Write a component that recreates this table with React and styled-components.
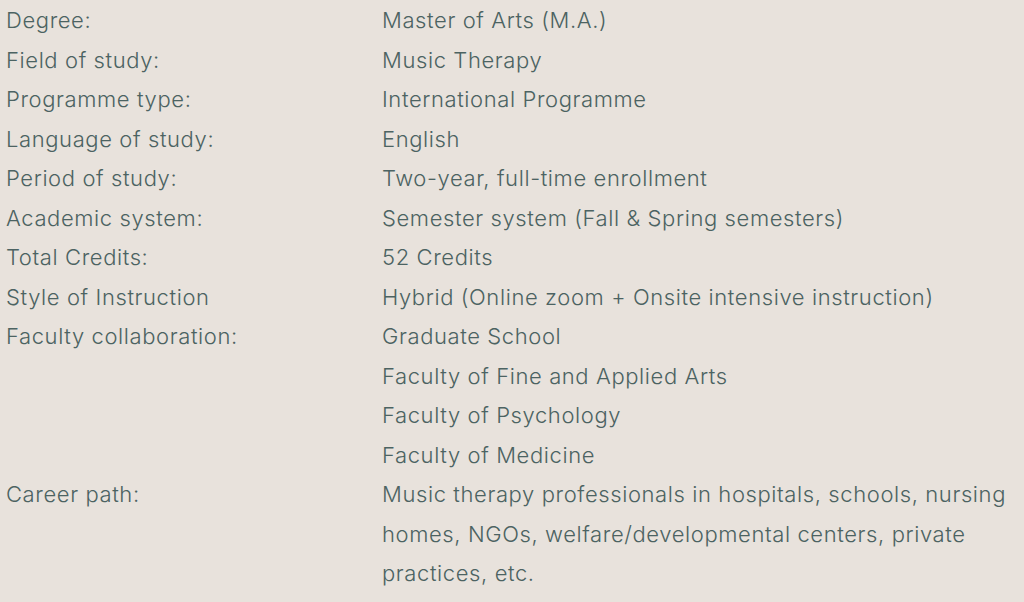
import React from 'react';
import styled, { createGlobalStyle } from 'styled-components';

const GlobalStyle = createGlobalStyle`
  html, body {
    margin: 0;
    padding: 0;
    background: #e8e2dc;
  }
`;

const Table = styled.div`
  display: grid;
  grid-template-columns: 376px 1fr;
  padding-left: 6px;
  padding-top: 1px;
  font-family: Inter, "Liberation Sans", sans-serif;
  font-weight: 300;
  font-size: 22px;
  line-height: 39.5px;
  letter-spacing: 0.6px;
  color: #4c6362;
  background: #e8e2dc;
  min-height: 602px;
  align-content: start;
`;

const Label = styled.div`
  grid-column: 1;
`;

const Value = styled.div`
  grid-column: 2;
`;

const rows = [
  ['Degree:', ['Master of Arts (M.A.)']],
  ['Field of study:', ['Music Therapy']],
  ['Programme type:', ['International Programme']],
  ['Language of study:', ['English']],
  ['Period of study:', ['Two-year, full-time enrollment']],
  ['Academic system:', ['Semester system (Fall & Spring semesters)']],
  ['Total Credits:', ['52 Credits']],
  ['Style of Instruction', ['Hybrid (Online zoom + Onsite intensive instruction)']],
  ['Faculty collaboration:', [
    'Graduate School',
    'Faculty of Fine and Applied Arts',
    'Faculty of Psychology',
    'Faculty of Medicine',
  ]],
  ['Career path:', ['Music therapy professionals in hospitals, schools, nursing homes, NGOs, welfare/developmental centers, private practices, etc.']],
];

export default function App() {
  return (
    <>
      <GlobalStyle />
      <Table>
        {rows.map(([label, values]) => (
          <React.Fragment key={label}>
            <Label>{label}</Label>
            <Value>
              {values.map((v) => (
                <div key={v}>{v}</div>
              ))}
            </Value>
          </React.Fragment>
        ))}
      </Table>
    </>
  );
}
